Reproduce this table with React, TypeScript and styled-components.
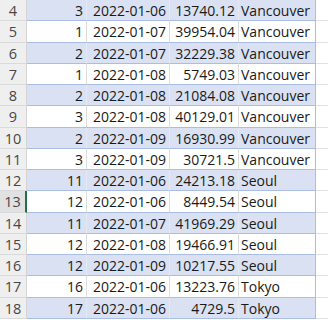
import React from 'react'
import styled, { createGlobalStyle } from 'styled-components'

const GlobalStyle = createGlobalStyle`
  html, body { margin: 0; padding: 0; background: #ffffff; }
  body { font-family: "Open Sans", "Noto Sans", sans-serif; }
`

type Rec = { n: number; id: number; date: string; amount: string; city: string }

const rows: Rec[] = [
  { n: 4, id: 3, date: '2022-01-06', amount: '13740.12', city: 'Vancouver' },
  { n: 5, id: 1, date: '2022-01-07', amount: '39954.04', city: 'Vancouver' },
  { n: 6, id: 2, date: '2022-01-07', amount: '32229.38', city: 'Vancouver' },
  { n: 7, id: 1, date: '2022-01-08', amount: '5749.03', city: 'Vancouver' },
  { n: 8, id: 2, date: '2022-01-08', amount: '21084.08', city: 'Vancouver' },
  { n: 9, id: 3, date: '2022-01-08', amount: '40129.01', city: 'Vancouver' },
  { n: 10, id: 2, date: '2022-01-09', amount: '16930.99', city: 'Vancouver' },
  { n: 11, id: 3, date: '2022-01-09', amount: '30721.5', city: 'Vancouver' },
  { n: 12, id: 11, date: '2022-01-06', amount: '24213.18', city: 'Seoul' },
  { n: 13, id: 12, date: '2022-01-06', amount: '8449.54', city: 'Seoul' },
  { n: 14, id: 11, date: '2022-01-07', amount: '41969.29', city: 'Seoul' },
  { n: 15, id: 12, date: '2022-01-08', amount: '19466.91', city: 'Seoul' },
  { n: 16, id: 12, date: '2022-01-09', amount: '10217.55', city: 'Seoul' },
  { n: 17, id: 16, date: '2022-01-06', amount: '13223.76', city: 'Tokyo' },
  { n: 18, id: 17, date: '2022-01-06', amount: '4729.5', city: 'Tokyo' },
]

const ACTIVE_ROW = 13

const App = () => {
  return (
    <>
      <GlobalStyle />
      <Sheet>
        {rows.map((r) => {
          const band = r.n % 2 === 0
          return (
            <Row key={r.n}>
              <RowHead $active={r.n === ACTIVE_ROW}>{r.n}</RowHead>
              <Cell $band={band} $align="right">{r.id}</Cell>
              <Cell $band={band} $align="right">{r.date}</Cell>
              <Cell $band={band} $align="right">{r.amount}</Cell>
              <Cell $band={band} $align="left" $edge>{r.city}</Cell>
              <Blank />
            </Row>
          )
        })}
      </Sheet>
    </>
  )
}

const Sheet = styled.div`
  width: 328px;
  height: 320px;
  overflow: hidden;
  display: flex;
  flex-direction: column;
  background: #ffffff;
`

const Row = styled.div`
  display: grid;
  grid-template-columns: 27px 60px 83px 69px 77px 1fr;
  height: 21.25px;
  flex: none;
`

const RowHead = styled.div<{ $active?: boolean }>`
  background: ${(p) => (p.$active ? '#e1e1e1' : '#efefef')};
  color: #474747;
  font-size: 14.5px;
  display: flex;
  align-items: center;
  justify-content: center;
  border-bottom: 1px solid #dadada;
  border-right: ${(p) => (p.$active ? '2px solid #217346' : '1px solid #d4d4d4')};
  box-sizing: border-box;
  padding-top: 1px;
`

const Cell = styled.div<{ $band?: boolean; $align: 'left' | 'right'; $edge?: boolean }>`
  background: ${(p) => (p.$band ? '#d9e1f2' : '#ffffff')};
  color: #1a1a1a;
  font-size: 14px;
  display: flex;
  align-items: center;
  justify-content: ${(p) => (p.$align === 'right' ? 'flex-end' : 'flex-start')};
  padding: 1px ${(p) => (p.$align === 'right' ? '3px' : '0')} 0 ${(p) => (p.$align === 'left' ? '2px' : '0')};
  border-bottom: 1px solid #a9bde5;
  border-right: 1px solid
    ${(p) => (p.$edge ? '#a9bde5' : p.$band ? '#e4e9f6' : '#dcdcdc')};
  box-sizing: border-box;
  white-space: nowrap;
  overflow: hidden;
`

const Blank = styled.div`
  border-bottom: 1px solid #e1e1e1;
  box-sizing: border-box;
`

export default App
